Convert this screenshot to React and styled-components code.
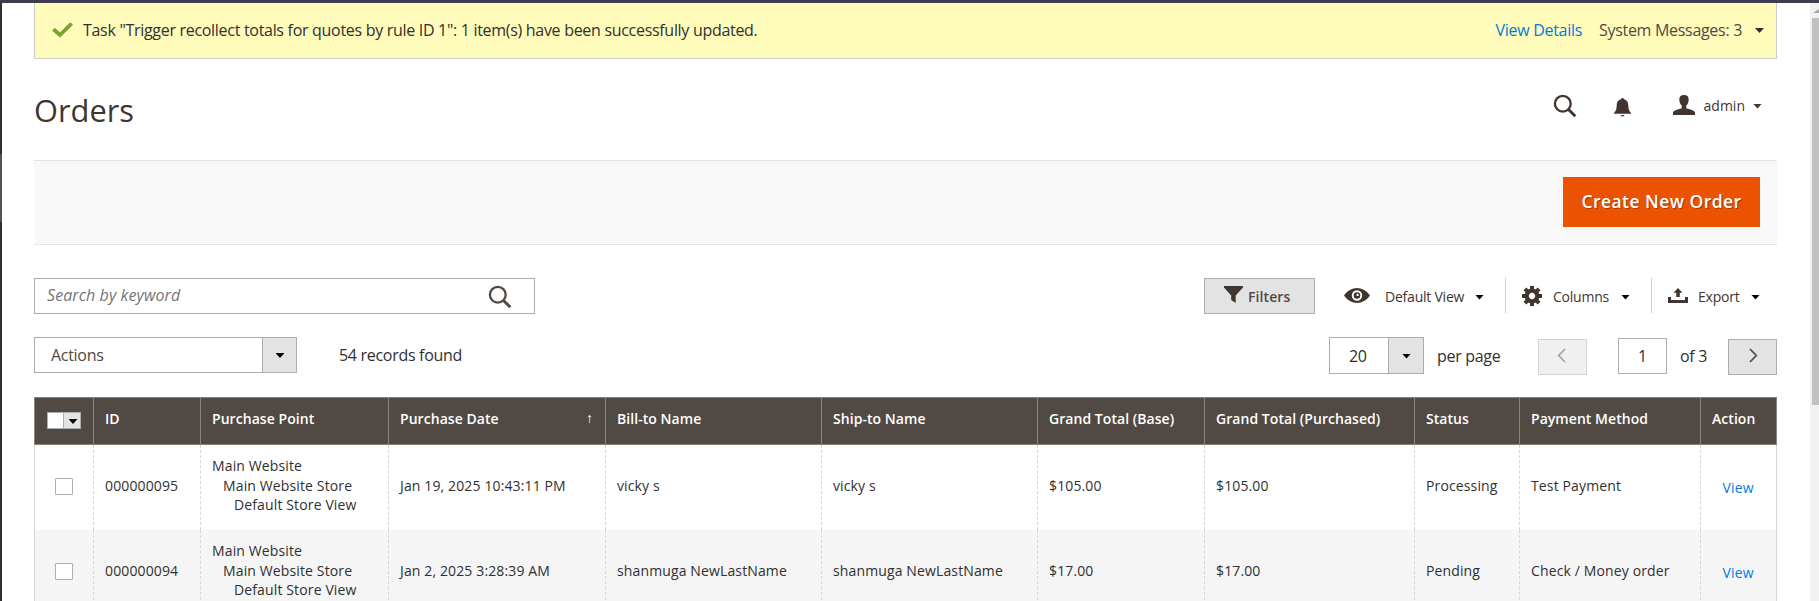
import React from "react";
import styled, { createGlobalStyle } from "styled-components";

const Global = createGlobalStyle`
  *, *::before, *::after { box-sizing: border-box; }
  body { margin: 0; background: #fff; overflow: hidden; }
  button, input { font: inherit; color: inherit; }
`;

const Page = styled.div`
  display: flex;
  flex-direction: column;
  height: 601px;
  overflow: hidden;
  font-family: "Open Sans", "Noto Sans", sans-serif;
  font-size: 14px;
  line-height: 19px;
  color: #303030;
`;
const WindowEdge = styled.div`height: 3px; flex: none; background: #403c4f;`;
const Frame = styled.div`display: flex; flex: 1; min-height: 0;`;
const SideEdge = styled.div`
  width: 2px;
  background: linear-gradient(#332f2e 0 151px, #555150 151px 219px, #332f2e 219px);
`;
const Content = styled.main`
  flex: 1;
  min-width: 0;
  padding: 0 33px 0 32px;
  overflow: hidden;
`;

const Scrollbar = styled.div`
  width: 9px;
  padding: 6px 0 0 2px;
  background: #f1f1f1;
  overflow: hidden;
`;
const ScrollUp = styled.div`
  width: 12px;
  height: 4px;
  margin: 0 0 5px 1px;
  background: #a3a3a3;
  clip-path: polygon(0 100%, 50% 0, 100% 100%);
`;
const ScrollThumb = styled.div`width: 7px; height: 387px; background: #c1c1c1;`;

const Notice = styled.section`
  display: flex;
  align-items: center;
  height: 56px;
  padding: 0 12px 0 17px;
  background: #fffbbb;
  border: 1px solid #ccc;
  border-top: 0;
  font-size: 16px;
  letter-spacing: -0.3px;
  svg { margin-top: -2px; }
`;
const NoticeText = styled.span`flex: 1; margin-left: 10px;`;
const Link = styled.a`color: #007bdb; text-decoration: none;`;
const NoticeToggle = styled.span`
  display: flex;
  align-items: center;
  gap: 13px;
  margin-left: 17px;
  color: #514943;
`;
const Caret = styled.i`
  display: block;
  width: 9px;
  height: 5px;
  background: ${(p) => p.$color || "#000"};
  clip-path: polygon(0 0, 100% 0, 50% 100%);
`;

const Header = styled.header`
  display: flex;
  align-items: flex-start;
  justify-content: space-between;
  height: 101px;
`;
const Title = styled.h1`
  margin: 31px 0 0;
  font-size: 30.8px;
  font-weight: 400;
  line-height: 41px;
  color: #41362f;
`;
const HeaderTools = styled.div`
  display: flex;
  align-items: center;
  height: 26px;
  margin: 34px 15px 0 0;
  color: #41362f;
`;
const UserMenu = styled.span`
  display: flex;
  align-items: center;
  margin-left: 42px;
  svg { margin-top: -2px; }
  span { margin: -2px 8px 0 9px; }
`;
const Bell = styled.span`display: flex; margin: 2px 0 0 37px;`;

const ActionBar = styled.section`
  display: flex;
  justify-content: flex-end;
  align-items: flex-start;
  height: 85px;
  padding: 16px 17px 0 0;
  background: #f8f8f8;
  border: solid #e3e3e3;
  border-width: 1px 0;
`;
const PrimaryButton = styled.button`
  width: 197px;
  height: 50px;
  padding: 0 0 2px;
  border: 0;
  background: #eb5202;
  color: #fff;
  font-size: 17.5px;
  font-weight: 600;
  letter-spacing: 0.45px;
  text-shadow: 1px 1px 0 rgba(0, 0, 0, 0.3);
`;

const Toolbar = styled.div`
  display: flex;
  justify-content: space-between;
  height: 36px;
  margin-top: 33px;
`;
const SearchBox = styled.div`
  display: flex;
  align-items: center;
  justify-content: space-between;
  width: 501px;
  padding: 2px 22px 0 12px;
  border: 1px solid #adadad;
  color: #514943;
`;
const Placeholder = styled.span`
  padding-bottom: 3px;
  font-size: 16px;
  letter-spacing: 0.08px;
  font-style: italic;
  color: #757575;
`;
const GridActions = styled.div`display: flex;`;
const FilterButton = styled.button`
  display: flex;
  align-items: center;
  gap: 5px;
  width: 111px;
  padding: 0 0 0 19px;
  border: 1px solid #adadad;
  background: #e3e3e3;
  color: #514943;
  font-weight: 600;
  letter-spacing: 0.1px;
`;
const FilterIcon = styled.span`display: flex; padding-bottom: 3px; color: #41362f;`;
const GridAction = styled.span`
  display: flex;
  align-items: center;
  width: ${(p) => p.$width}px;
  height: 35px;
  padding: 2px 0 0 ${(p) => p.$pad}px;
  border-left: ${(p) => (p.$divider ? "1px solid #ccc" : "0")};
  color: #41362f;
  svg { margin: -2px 0 0; }
`;
const ActionLabel = styled.span`
  margin: 0 auto 0 ${(p) => p.$gap}px;
  letter-spacing: -0.22px;
  white-space: nowrap;
`;
const ActionCaret = styled.span`margin: 1px ${(p) => p.$right}px 0 0;`;

const Pager = styled.div`
  display: flex;
  align-items: flex-start;
  height: 38px;
  margin: 23px 0 22px;
  font-size: 16px;
  letter-spacing: -0.3px;
`;
const Select = styled.div`
  display: flex;
  width: ${(p) => p.$width}px;
  height: ${(p) => p.$height}px;
  border: 1px solid #adadad;
  line-height: ${(p) => p.$height - 1}px;
  color: ${(p) => p.$color};
`;
const SelectValue = styled.span`flex: 1; padding-left: ${(p) => p.$pad}px;`;
const SelectArrow = styled.span`
  display: flex;
  align-items: center;
  justify-content: center;
  width: ${(p) => p.$width}px;
  padding: 1px 0 0 1px;
  border-left: 1px solid #adadad;
  background: #e3e3e3;
`;
const Records = styled.span`flex: 1; margin: 9px 0 0 42px; `;
const PagerText = styled.span`width: ${(p) => p.$width}px; margin: 10px 0 0 13px; white-space: nowrap;`;
const PageButton = styled.button`
  display: flex;
  align-items: center;
  justify-content: center;
  width: 49px;
  height: 36px;
  margin-top: 2px;
  padding: 0 ${(p) => (p.disabled ? 5 : 0)}px 3px 2px;
  border: 1px solid #adadad;
  background: #e3e3e3;
  color: #514943;
  opacity: ${(p) => (p.disabled ? 0.5 : 1)};
`;
const PageNumber = styled.span`
  width: 49px;
  height: 36px;
  margin: 1px 0 0 31px;
  border: 1px solid #adadad;
  line-height: 35px;
  text-align: center;
`;

const Row = styled.div`
  display: grid;
  grid-template-columns: 59px 107px 188px 217px 216px 216px 167px 210px 105px 181px 77px;
`;
const HeadRow = styled(Row)`
  height: 48px;
  background: #514943;
  border: solid #8a837f;
  border-width: 1px 0;
  color: #fff;
  font-weight: 600;
  letter-spacing: 0.05px;
`;
const HeadCell = styled.div`
  display: flex;
  align-items: center;
  justify-content: space-between;
  padding: 0 12px 5px 11px;
  border-left: 1px solid #8a837f;
  white-space: nowrap;
  &:last-child { border-right: 1px solid #8a837f; padding-right: 0; }
`;
const BodyRow = styled(Row)`
  height: 85px;
  letter-spacing: 0.13px;
  background: ${(p) => (p.$striped ? "#f5f5f5" : "#fff")};
`;
const Cell = styled.div`
  display: flex;
  align-items: center;
  padding: 0 0 4px 11px;
  border-left: 1px dashed #d6d6d6;
  white-space: nowrap;
  &:first-child { border-left: 1px solid #d6d6d6; }
  &:last-child { border-right: 1px solid #d6d6d6; padding: 0 0 0 21.5px; }
`;
const StoreTree = styled.div`
  line-height: 19.5px;
  div { padding-left: 11px; }
`;
const Checkbox = styled.span`
  width: 18px;
  height: 17px;
  margin: 2px 0 0 9px;
  border: 1px solid #adadad;
  border-radius: 1px;
  background: #fff;
`;
const MultiCheck = styled.span`
  display: flex;
  width: 34px;
  height: 17px;
  margin: 4px 0 0 1px;
  border: 1px solid #adadad;
  background: #fff;
`;
const MultiArrow = styled.span`
  display: flex;
  align-items: center;
  justify-content: center;
  width: 17px;
  margin-left: auto;
  padding: 2px 0 0 2px;
  border-left: 1px solid #adadad;
  background: #e3e3e3;
`;
const SortArrow = styled.span`font-weight: 400; font-size: 14px; margin-top: -3px;`;

const SearchIcon = () => (
  <svg width="24" height="24" viewBox="0 0 24 24" fill="none" stroke="currentColor">
    <circle cx="9.8" cy="9.7" r="7.9" strokeWidth="2.3" />
    <path d="M15.5 15.5l6.800 6.700" strokeWidth="3" />
  </svg>
);
const CheckIcon = () => (
  <svg width="21" height="16" viewBox="0 0 21 16" fill="none" stroke="#79a22e" strokeWidth="3.8">
    <path d="M1.4 7.2L8 13 19.6 1.5" />
  </svg>
);
const BellIcon = () => (
  <svg width="17" height="19" viewBox="0 0 17 19" fill="currentColor">
    <path d="M8.5 0c.9 0 1.4.6 1.5 1.3 2.800.7 4.200 2.900 4.300 6 .1 3.500.6 5.600 2.700 7.700v.8H0V15c2.100-2.100 2.600-4.200 2.700-7.700.1-3.100 1.500-5.300 4.300-6C7.100.6 7.600 0 8.500 0zM6.500 17h4c-.3.900-1 1.400-2 1.400s-1.700-.5-2-1.400z" />
  </svg>
);
const UserIcon = () => (
  <svg width="22" height="20" viewBox="0 0 22 20" fill="currentColor">
    <path d="M11 0c3 0 4.700 1.500 4.700 4.300 0 2.700-.9 5-2.400 6.300v2.600c3.500 1.300 8.300 1.700 8.700 4.300V20H0v-2.500c.4-2.600 5.200-3 8.700-4.300v-2.600C7.200 9.300 6.300 7 6.300 4.300 6.300 1.500 8 0 11 0z" />
  </svg>
);
const FunnelIcon = () => (
  <svg width="19" height="17" viewBox="0 0 19 17" fill="currentColor">
    <path d="M0 0h19v1.600L11.700 9.500V17L7.200 14V9.500L0 1.600z" />
  </svg>
);
const EyeIcon = () => (
  <svg width="26" height="15" viewBox="0 0 26 15" fill="currentColor" fillRule="evenodd">
    <path d="M0 7.500C3.500 2.800 8 0 13 0s9.500 2.800 13 7.500C22.500 12.200 18 15 13 15S3.500 12.200 0 7.500zM13 2.300a5.200 5.200 0 100 10.400 5.200 5.200 0 000-10.400z" />
    <circle cx="13" cy="7.500" r="3.300" />
    <circle cx="13.600" cy="6.900" r="1.200" fill="#fff" />
  </svg>
);
const GearIcon = () => (
  <svg width="20" height="20" viewBox="-10 -10 20 20" fill="none" stroke="currentColor">
    <circle r="5.300" strokeWidth="4.200" />
    {[0, 45, 90, 135].map((a) => (
      <g key={a} transform={`rotate(${a})`}>
        <path d="M0-10v4M0 6v4" strokeWidth="4" />
      </g>
    ))}
  </svg>
);
const ExportIcon = () => (
  <svg width="20" height="15" viewBox="0 0 20 15" fill="currentColor">
    <path d="M10 0l4.500 4.700h-2.700V9H8.200V4.700H5.500zM0 9h3v3h14V9h3v6H0z" />
  </svg>
);
const Chevron = ({ flip }) => (
  <svg width="9" height="15" viewBox="0 0 9 15" fill="none" stroke="currentColor" strokeWidth="1.700">
    <path d={flip ? "M1 1l6.300 6.500L1 14" : "M8 1L1.700 7.500 8 14"} />
  </svg>
);

const heads = ["ID", "Purchase Point", "Purchase Date", "Bill-to Name", "Ship-to Name", "Grand Total (Base)", "Grand Total (Purchased)", "Status", "Payment Method", "Action"];
const orders = [
  { id: "000000095", date: "Jan 19, 2025 10:43:11 PM", name: "vicky s", total: "$105.00", status: "Processing", method: "Test Payment" },
  { id: "000000094", date: "Jan 2, 2025 3:28:39 AM", name: "shanmuga NewLastName", total: "$17.00", status: "Pending", method: "Check / Money order" },
];

export default function App() {
  return (
    <Page>
      <Global />
      <WindowEdge />
      <Frame>
        <SideEdge />
        <Content>
          <Notice>
            <CheckIcon />
            <NoticeText>Task "Trigger recollect totals for quotes by rule ID 1": 1 item(s) have been successfully updated.</NoticeText>
            <Link>View Details</Link>
            <NoticeToggle>System Messages: 3 <Caret $color="#303030" /></NoticeToggle>
          </Notice>
          <Header>
            <Title>Orders</Title>
            <HeaderTools>
              <SearchIcon />
              <Bell><BellIcon /></Bell>
              <UserMenu><UserIcon /><span>admin</span><Caret $color="#41362f" /></UserMenu>
            </HeaderTools>
          </Header>
          <ActionBar><PrimaryButton>Create New Order</PrimaryButton></ActionBar>
          <Toolbar>
            <SearchBox><Placeholder>Search by keyword</Placeholder><SearchIcon /></SearchBox>
            <GridActions>
              <FilterButton><FilterIcon><FunnelIcon /></FilterIcon>Filters</FilterButton>
              <GridAction $width={190} $pad={29}>
                <EyeIcon /><ActionLabel $gap={15}>Default View</ActionLabel><ActionCaret $right={21}><Caret /></ActionCaret>
              </GridAction>
              <GridAction $width={146} $pad={16} $divider>
                <GearIcon /><ActionLabel $gap={11}>Columns</ActionLabel><ActionCaret $right={21}><Caret /></ActionCaret>
              </GridAction>
              <GridAction $width={126} $pad={16} $divider>
                <ExportIcon /><ActionLabel $gap={10}>Export</ActionLabel><ActionCaret $right={17}><Caret /></ActionCaret>
              </GridAction>
            </GridActions>
          </Toolbar>
          <Pager>
            <Select $width={263} $height={36} $color="#514943">
              <SelectValue $pad={16}>Actions</SelectValue><SelectArrow $width={34}><Caret /></SelectArrow>
            </Select>
            <Records>54 records found</Records>
            <Select $width={95} $height={37} $color="#303030">
              <SelectValue $pad={19}>20</SelectValue><SelectArrow $width={35}><Caret /></SelectArrow>
            </Select>
            <PagerText $width={101}>per page</PagerText>
            <PageButton disabled><Chevron /></PageButton>
            <PageNumber>1</PageNumber>
            <PagerText $width={48}>of 3</PagerText>
            <PageButton><Chevron flip /></PageButton>
          </Pager>
          <HeadRow>
            <HeadCell><MultiCheck><MultiArrow><Caret /></MultiArrow></MultiCheck></HeadCell>
            {heads.map((h) => (
              <HeadCell key={h}>{h}{h === "Purchase Date" && <SortArrow>↑</SortArrow>}</HeadCell>
            ))}
          </HeadRow>
          {orders.map((o, i) => (
            <BodyRow key={o.id} $striped={i % 2 === 1}>
              <Cell><Checkbox /></Cell>
              <Cell>{o.id}</Cell>
              <Cell><StoreTree>Main Website<div>Main Website Store<div>Default Store View</div></div></StoreTree></Cell>
              <Cell>{o.date}</Cell>
              <Cell>{o.name}</Cell>
              <Cell>{o.name}</Cell>
              <Cell>{o.total}</Cell>
              <Cell>{o.total}</Cell>
              <Cell>{o.status}</Cell>
              <Cell>{o.method}</Cell>
              <Cell><Link>View</Link></Cell>
            </BodyRow>
          ))}
        </Content>
        <Scrollbar><ScrollUp /><ScrollThumb /></Scrollbar>
      </Frame>
    </Page>
  );
}
